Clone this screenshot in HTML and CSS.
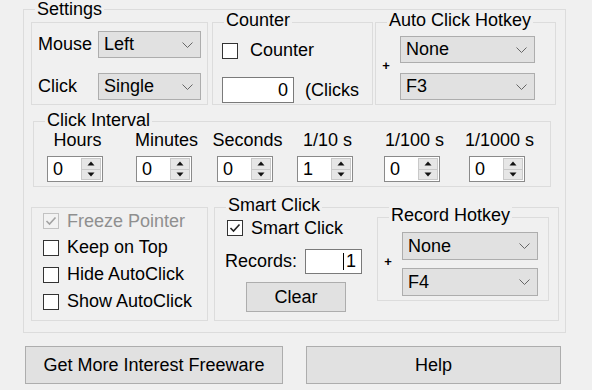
FILE: index.html
```html
<!DOCTYPE html>
<html lang="en">
<head>
  <meta charset="UTF-8" />
  <title>Auto Clicker</title>
  <link rel="stylesheet" href="styles.css">
</head>
<body>
  <div class="group settings">
    <span class="group-title">Settings</span>

    <div class="row-top">
      <div class="group mouse-box">
        <div class="field">
          <span class="field-label">Mouse</span>
          <div class="select select-mouse"><span>Left</span><svg class="chev" width="11" height="6" viewBox="0 0 11 6"><polyline points="0.5,0.5 5.5,5.5 10.5,0.5" /></svg></div>
        </div>
        <div class="field field-second">
          <span class="field-label">Click</span>
          <div class="select select-mouse"><span>Single</span><svg class="chev" width="11" height="6" viewBox="0 0 11 6"><polyline points="0.5,0.5 5.5,5.5 10.5,0.5" /></svg></div>
        </div>
      </div>

      <div class="group counter-box">
        <span class="group-title">Counter</span>
        <label class="check-row">
          <span class="checkbox"></span>
          <span class="check-text counter-text">Counter</span>
        </label>
        <div class="counter-row">
          <div class="input counter-input">0</div>
          <span class="clicks">(Clicks</span>
        </div>
      </div>

      <div class="group hotkey-box">
        <span class="group-title">Auto Click Hotkey</span>
        <div class="hotkey-inner">
          <span class="plus">+</span>
          <div class="select-stack">
            <div class="select select-hotkey"><span>None</span><svg class="chev" width="11" height="6" viewBox="0 0 11 6"><polyline points="0.5,0.5 5.5,5.5 10.5,0.5" /></svg></div>
            <div class="select select-hotkey"><span>F3</span><svg class="chev" width="11" height="6" viewBox="0 0 11 6"><polyline points="0.5,0.5 5.5,5.5 10.5,0.5" /></svg></div>
          </div>
        </div>
      </div>
    </div>

    <div class="group interval-box">
      <span class="group-title title-interval">Click Interval</span>
      <div class="interval-grid" id="intervalGrid"></div>
    </div>

    <div class="row-bottom">
      <div class="group checks-box">
        <label class="check-row option disabled">
          <span class="checkbox checked"><svg width="14" height="14" viewBox="0 0 14 14"><polyline points="2.5,7 5.5,10 11.5,3.5" /></svg></span>
          <span class="check-text">Freeze Pointer</span>
        </label>
        <label class="check-row option">
          <span class="checkbox"></span>
          <span class="check-text">Keep on Top</span>
        </label>
        <label class="check-row option">
          <span class="checkbox"></span>
          <span class="check-text">Hide AutoClick</span>
        </label>
        <label class="check-row option">
          <span class="checkbox"></span>
          <span class="check-text">Show AutoClick</span>
        </label>
      </div>

      <div class="group smart-box">
        <span class="group-title">Smart Click</span>
        <div class="smart-left">
          <label class="check-row smart-check">
            <span class="checkbox checked"><svg width="14" height="14" viewBox="0 0 14 14"><polyline points="2.5,7 5.5,10 11.5,3.5" /></svg></span>
            <span class="check-text">Smart Click</span>
          </label>
          <div class="records-row">
            <span class="records-label">Records:</span>
            <div class="input records-input"><span class="caret"></span>1</div>
          </div>
          <button class="btn btn-clear">Clear</button>
        </div>

        <div class="group record-box">
          <span class="group-title">Record Hotkey</span>
          <div class="hotkey-inner">
            <span class="plus">+</span>
            <div class="select-stack stack-record">
              <div class="select select-record"><span>None</span><svg class="chev" width="11" height="6" viewBox="0 0 11 6"><polyline points="0.5,0.5 5.5,5.5 10.5,0.5" /></svg></div>
              <div class="select select-record"><span>F4</span><svg class="chev" width="11" height="6" viewBox="0 0 11 6"><polyline points="0.5,0.5 5.5,5.5 10.5,0.5" /></svg></div>
            </div>
          </div>
        </div>
      </div>
    </div>
  </div>

  <div class="actions">
    <button class="btn btn-more">Get More Interest Freeware</button>
    <button class="btn btn-help">Help</button>
  </div>

  <script>
    const intervals = [
      { label: "Hours", value: "0" },
      { label: "Minutes", value: "0" },
      { label: "Seconds", value: "0" },
      { label: "1/10 s", value: "1" },
      { label: "1/100 s", value: "0" },
      { label: "1/1000 s", value: "0" }
    ];

    const grid = document.getElementById("intervalGrid");

    intervals.forEach((item) => {
      const col = document.createElement("div");
      col.className = "interval-col";
      col.innerHTML = `
        <span class="interval-label">${item.label}</span>
        <div class="spin">
          <span class="spin-value">${item.value}</span>
          <div class="spin-btns">
            <span class="spin-btn"><svg width="8" height="5" viewBox="0 0 8 5"><polygon points="4,0.5 7.5,4.5 0.5,4.5" /></svg></span>
            <span class="spin-btn"><svg width="8" height="5" viewBox="0 0 8 5"><polygon points="0.5,0.5 7.5,0.5 4,4.5" /></svg></span>
          </div>
        </div>`;
      grid.appendChild(col);
    });
  </script>
</body>
</html>
```

FILE: styles.css
```css
* {
  margin: 0;
  padding: 0;
  box-sizing: border-box;
}
body {
  font-family: 'Liberation Sans', Arial, sans-serif;
  font-size: 18px;
  color: #000;
  background: #f0f0f0;
  width: 592px;
  height: 390px;
  overflow: hidden;
}

/* group boxes */
.group {
  position: relative;
  border: 1px solid #dcdcdc;
}
.group-title {
  position: absolute;
  top: -13px;
  left: 11px;
  padding: 0 2px;
  line-height: 20px;
  background: #f0f0f0;
  white-space: nowrap;
}
.settings {
  margin: 9px 0 0 23px;
  width: 543px;
  height: 324px;
  padding: 12px 0 0 7px;
}
.settings > .group-title {
  top: -11px;
}

/* common controls */
.select {
  display: flex;
  align-items: center;
  justify-content: space-between;
  height: 27px;
  padding: 0 7px 0 5px;
  background: #e1e1e1;
  border: 1px solid #adadad;
}
.chev polyline {
  fill: none;
  stroke: #666;
  stroke-width: 1;
}
.input {
  background: #fff;
  border: 1px solid #7a7a7a;
  text-align: right;
}
.checkbox {
  display: flex;
  align-items: center;
  justify-content: center;
  width: 16px;
  height: 16px;
  flex: none;
  background: #fff;
  border: 1px solid #333;
}
.checkbox svg polyline {
  fill: none;
  stroke: #222;
  stroke-width: 1.6;
}
.check-row {
  display: flex;
  align-items: center;
}
.check-text {
  margin-left: 8px;
  white-space: nowrap;
}
.btn {
  font-family: inherit;
  font-size: 18px;
  color: #000;
  background: #e1e1e1;
  border: 1px solid #adadad;
}
.plus {
  width: 20px;
  margin-right: 4px;
  margin-bottom: 6px;
  text-align: center;
  font-size: 13px;
  font-weight: bold;
}

/* top row */
.row-top {
  display: flex;
  height: 83px;
}
.mouse-box {
  width: 177px;
  padding: 8px 0 0 6px;
}
.field {
  display: flex;
  align-items: center;
  height: 27px;
}
.field-second {
  margin-top: 15px;
}
.field-label {
  width: 60px;
}
.select-mouse {
  width: 103px;
}
.counter-box {
  width: 161px;
  margin-left: 4px;
  padding: 17px 0 0 9px;
}
.counter-text {
  margin-left: 12px;
}
.counter-row {
  display: flex;
  align-items: center;
  margin-top: 16px;
}
.counter-input {
  width: 72px;
  height: 26px;
  line-height: 24px;
  padding-right: 5px;
}
.clicks {
  margin-left: 11px;
  white-space: nowrap;
}
.hotkey-box {
  width: 181px;
  margin-left: 2px;
  padding-top: 13px;
}
.hotkey-inner {
  display: flex;
  align-items: center;
}
.select-stack {
  display: flex;
  flex-direction: column;
  gap: 10px;
}
.select-hotkey {
  width: 135px;
}

/* click interval */
.interval-box {
  width: 518px;
  height: 66px;
  margin: 16px 0 0 2px;
  padding: 8px 0 0 13px;
}
.title-interval {
  top: -12px;
}
.interval-grid {
  display: grid;
  grid-template-columns: 89px 81px 80px 87px 85px 56px;
}
.interval-col {
  display: flex;
  flex-direction: column;
  align-items: center;
  width: 56px;
}
.interval-label {
  line-height: 20px;
  padding-left: 5px;
  white-space: nowrap;
}
.spin {
  display: flex;
  width: 56px;
  height: 26px;
  margin-top: 6px;
  background: #fff;
  border: 1px solid #8a8a8a;
}
.spin-value {
  flex: 1;
  padding-left: 5px;
  line-height: 24px;
}
.spin-btns {
  display: flex;
  flex-direction: column;
  width: 22px;
  padding: 1px;
}
.spin-btn {
  flex: 1;
  display: flex;
  align-items: center;
  justify-content: center;
  background: #e6e6e6;
  border: 1px solid #c9c9c9;
}
.spin-btn + .spin-btn {
  border-top: none;
}
.spin-btn polygon {
  fill: #111;
}

/* bottom row */
.row-bottom {
  display: flex;
  align-items: flex-start;
  margin-top: 20px;
}
.checks-box {
  width: 177px;
  height: 114px;
  padding-left: 11px;
}
.option {
  height: 27px;
}
.option:first-child {
  height: 26px;
}
.disabled .check-text {
  color: #8f8f8f;
}
.disabled .checkbox {
  background: #f2f2f2;
  border-color: #c2c2c2;
}
.disabled .checkbox svg polyline {
  stroke: #a2a2a2;
}
.smart-box {
  display: flex;
  align-items: flex-start;
  width: 345px;
  height: 114px;
  margin-left: 6px;
}
.smart-left {
  display: flex;
  flex-direction: column;
  width: 162px;
  padding: 10px 0 0 10px;
}
.smart-check {
  height: 20px;
  margin-left: 2px;
}
.records-row {
  display: flex;
  align-items: center;
  margin-top: 11px;
}
.records-label {
  width: 80px;
}
.records-input {
  display: flex;
  align-items: center;
  justify-content: flex-end;
  width: 57px;
  height: 25px;
  padding-right: 5px;
}
.caret {
  width: 1px;
  height: 17px;
  margin-right: 2px;
  background: #000;
}
.btn-clear {
  width: 100px;
  height: 30px;
  margin: 8px 0 0 21px;
}
.record-box {
  width: 172px;
  height: 84px;
  margin-top: 9px;
  padding-top: 14px;
}
.stack-record {
  gap: 8px;
}
.select-record {
  width: 136px;
  height: 28px;
}

/* bottom buttons */
.actions {
  display: flex;
  margin: 13px 0 0 25px;
}
.btn-more {
  width: 258px;
  height: 38px;
}
.btn-help {
  width: 255px;
  height: 38px;
  margin-left: 23px;
}
```
